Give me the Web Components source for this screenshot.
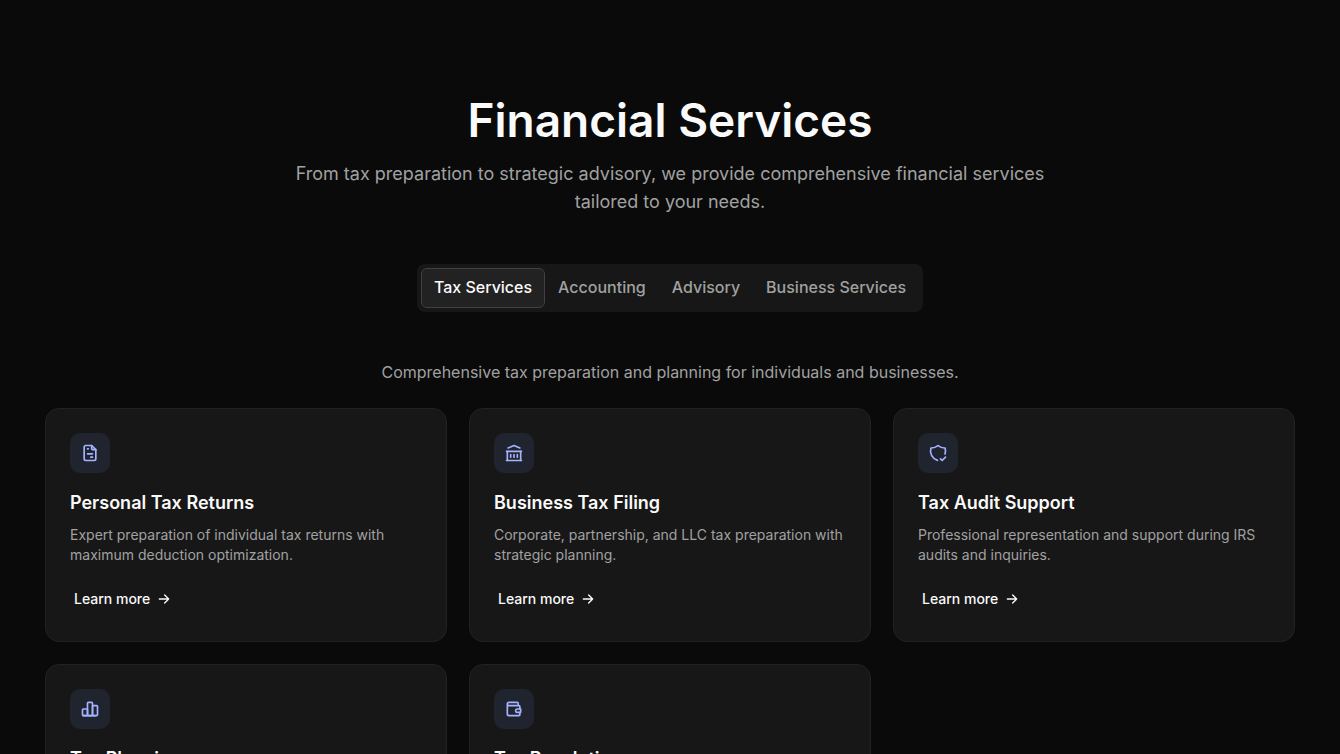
<!DOCTYPE html>
<html lang="en">
<head>
<meta charset="utf-8">
<meta name="viewport" content="width=device-width, initial-scale=1">
<title>Financial Services</title>
<style>
  :root {
    --background: #0a0a0a;
    --surface: #171717;
    --tab-active: #222222;
    --tab-border: #404040;
    --border: #222222;
    --foreground: #fafafa;
    --muted: #a1a1a1;
    --accent: #a3b3ff;
    --accent-soft: #20242e;
    scrollbar-width: none;
  }

  body {
    margin: 0;
    background: var(--background);
    color: var(--foreground);
    font-family: Inter, "Liberation Sans", sans-serif;
    font-size: 16px;
    line-height: 24px;
  }
</style>
</head>
<body>
<services-section>
  <h1 slot="title">Financial Services</h1>
  <p slot="lead">From tax preparation to strategic advisory, we provide comprehensive financial services tailored to your needs.</p>

  <service-tabs slot="tabs">
    <service-tab selected>Tax Services</service-tab>
    <service-tab>Accounting</service-tab>
    <service-tab>Advisory</service-tab>
    <service-tab>Business Services</service-tab>
  </service-tabs>

  <p slot="summary">Comprehensive tax preparation and planning for individuals and businesses.</p>

  <service-card icon="invoice" href="#personal-tax">
    <span slot="title">Personal Tax Returns</span>
    Expert preparation of individual tax returns with maximum deduction optimization.
  </service-card>
  <service-card icon="bank" href="#business-tax">
    <span slot="title">Business Tax Filing</span>
    Corporate, partnership, and LLC tax preparation with strategic planning.
  </service-card>
  <service-card icon="shield" href="#tax-audit">
    <span slot="title">Tax Audit Support</span>
    Professional representation and support during IRS audits and inquiries.
  </service-card>
  <service-card icon="chart" href="#tax-planning">
    <span slot="title">Tax Planning</span>
    Year-round strategies to reduce your tax liability.
  </service-card>
  <service-card icon="wallet" href="#tax-resolution">
    <span slot="title">Tax Resolution</span>
    Help with back taxes, penalties, and payment plans.
  </service-card>
</services-section>

<script>
// 24x24 outline icons
const ICONS = {
  invoice: `
    <path d="M14 3v4a1 1 0 0 0 1 1h4"/>
    <path d="M17 21h-10a2 2 0 0 1 -2 -2v-14a2 2 0 0 1 2 -2h7l5 5v11a2 2 0 0 1 -2 2z"/>
    <path d="M9 7h1M9 13h6M13 17h2"/>`,
  bank: `
    <path d="M3 21h18M3 10h18M5 6l7 -3l7 3"/>
    <path d="M4 10v11M20 10v11M8 14v3M12 14v3M16 14v3"/>`,
  shield: `
    <path d="M11.46 20.846a12 12 0 0 1 -7.96 -14.846a12 12 0 0 0 8.5 -3a12 12 0 0 0 8.5 3a12 12 0 0 1 -.09 7.06"/>
    <path d="M15 19l2 2l4 -4"/>`,
  chart: `
    <path d="M3 13a1 1 0 0 1 1 -1h4a1 1 0 0 1 1 1v6a1 1 0 0 1 -1 1h-4a1 1 0 0 1 -1 -1z"/>
    <path d="M15 9a1 1 0 0 1 1 -1h4a1 1 0 0 1 1 1v10a1 1 0 0 1 -1 1h-4a1 1 0 0 1 -1 -1z"/>
    <path d="M9 5a1 1 0 0 1 1 -1h4a1 1 0 0 1 1 1v14a1 1 0 0 1 -1 1h-4a1 1 0 0 1 -1 -1z"/>
    <path d="M4 20h14"/>`,
  wallet: `
    <path d="M17 8v-3a1 1 0 0 0 -1 -1h-10a2 2 0 0 0 0 4h12a1 1 0 0 1 1 1v3m0 4v3a1 1 0 0 1 -1 1h-12a2 2 0 0 1 -2 -2v-12"/>
    <path d="M20 12v4h-4a2 2 0 0 1 0 -4h4"/>`,
  arrow: `<path d="M5 12h14M13 18l6 -6M13 6l6 6"/>`,
};

// Page section: header, tab bar and the grid of cards
class ServicesSection extends HTMLElement {
  constructor() {
    super();
    this.attachShadow({ mode: "open" });
    this.shadowRoot.innerHTML = `
      <style>
        :host {
          display: block;
          padding: 96px 24px;
        }

        header {
          max-width: 768px;
          margin: 0 auto 48px;
          text-align: center;
        }

        ::slotted(h1) {
          margin: 0 0 16px;
          font-size: 46px;
          font-weight: 600;
          line-height: 48px;
        }

        ::slotted(p) {
          margin: 0;
          color: var(--muted);
        }

        header ::slotted(p) {
          font-size: 18px;
          line-height: 28px;
        }

        .tabs {
          display: flex;
          justify-content: center;
          margin-bottom: 48px;
        }

        .summary {
          margin-bottom: 24px;
          text-align: center;
        }

        .grid {
          display: grid;
          grid-template-columns: repeat(3, 1fr);
          gap: 22px;
          max-width: 1250px;
          margin: 0 auto;
        }

        @media (max-width: 1000px) {
          .grid {
            grid-template-columns: repeat(2, 1fr);
          }
        }

        @media (max-width: 640px) {
          .grid {
            grid-template-columns: 1fr;
          }
        }
      </style>
      <header>
        <slot name="title"></slot>
        <slot name="lead"></slot>
      </header>
      <div class="tabs"><slot name="tabs"></slot></div>
      <div class="summary"><slot name="summary"></slot></div>
      <div class="grid"><slot></slot></div>
    `;
  }
}

class ServiceTabs extends HTMLElement {
  constructor() {
    super();
    this.attachShadow({ mode: "open" });
    this.shadowRoot.innerHTML = `
      <style>
        :host {
          display: flex;
          flex-wrap: wrap;
          padding: 4px;
          border-radius: 8px;
          background: var(--surface);
        }
      </style>
      <slot></slot>
    `;

    // Only one tab stays selected
    this.addEventListener("tab-selected", (event) => {
      this.querySelectorAll("service-tab").forEach((tab) => {
        tab.toggleAttribute("selected", tab === event.target);
      });
    });
  }
}

class ServiceTab extends HTMLElement {
  static observedAttributes = ["selected"];

  constructor() {
    super();
    this.attachShadow({ mode: "open" });
    this.shadowRoot.innerHTML = `
      <style>
        :host {
          display: block;
        }

        button {
          padding: 6px 12px 8px;
          border: 1px solid transparent;
          border-radius: 6px;
          background: transparent;
          color: var(--muted);
          font: inherit;
          font-weight: 500;
          cursor: pointer;
        }

        button:hover {
          color: var(--foreground);
        }

        :host([selected]) button {
          border-color: var(--tab-border);
          background: var(--tab-active);
          color: var(--foreground);
        }
      </style>
      <button type="button" aria-pressed="false"><slot></slot></button>
    `;
    this.button = this.shadowRoot.querySelector("button");
    this.button.addEventListener("click", () => {
      this.dispatchEvent(new CustomEvent("tab-selected", { bubbles: true }));
    });
  }

  attributeChangedCallback() {
    this.button.setAttribute("aria-pressed", this.hasAttribute("selected"));
  }
}

class ServiceCard extends HTMLElement {
  constructor() {
    super();
    this.attachShadow({ mode: "open" });
  }

  connectedCallback() {
    this.shadowRoot.innerHTML = `
      <style>
        :host {
          display: flex;
          flex-direction: column;
          align-items: flex-start;
          padding: 24px;
          border: 1px solid var(--border);
          border-radius: 14px;
          background: var(--surface);
        }

        svg {
          fill: none;
          stroke: currentColor;
          stroke-width: 2;
          stroke-linecap: round;
          stroke-linejoin: round;
        }

        .icon {
          display: flex;
          align-items: center;
          justify-content: center;
          width: 40px;
          height: 40px;
          margin-bottom: 16px;
          border-radius: 10px;
          background: var(--accent-soft);
          color: var(--accent);
        }

        h3 {
          margin: 0 0 8px;
          font-size: 18px;
          font-weight: 600;
          line-height: 28px;
        }

        p {
          margin: 0 0 16px;
          color: var(--muted);
          font-size: 14px;
          line-height: 20px;
        }

        a {
          display: flex;
          align-items: center;
          gap: 6px;
          height: 36px;
          margin-top: auto;
          padding: 0 4px;
          color: inherit;
          font-size: 14px;
          font-weight: 500;
          line-height: 20px;
          text-decoration: none;
        }

        a:hover {
          text-decoration: underline;
        }
      </style>
      <div class="icon">
        <svg width="20" height="20" viewBox="0 0 24 24" aria-hidden="true">${ICONS[this.getAttribute("icon")]}</svg>
      </div>
      <h3><slot name="title"></slot></h3>
      <p><slot></slot></p>
      <a href="${this.getAttribute("href")}">
        Learn more
        <svg width="16" height="16" viewBox="0 0 24 24" aria-hidden="true">${ICONS.arrow}</svg>
      </a>
    `;
  }
}

customElements.define("services-section", ServicesSection);
customElements.define("service-tabs", ServiceTabs);
customElements.define("service-tab", ServiceTab);
customElements.define("service-card", ServiceCard);
</script>
</body>
</html>
